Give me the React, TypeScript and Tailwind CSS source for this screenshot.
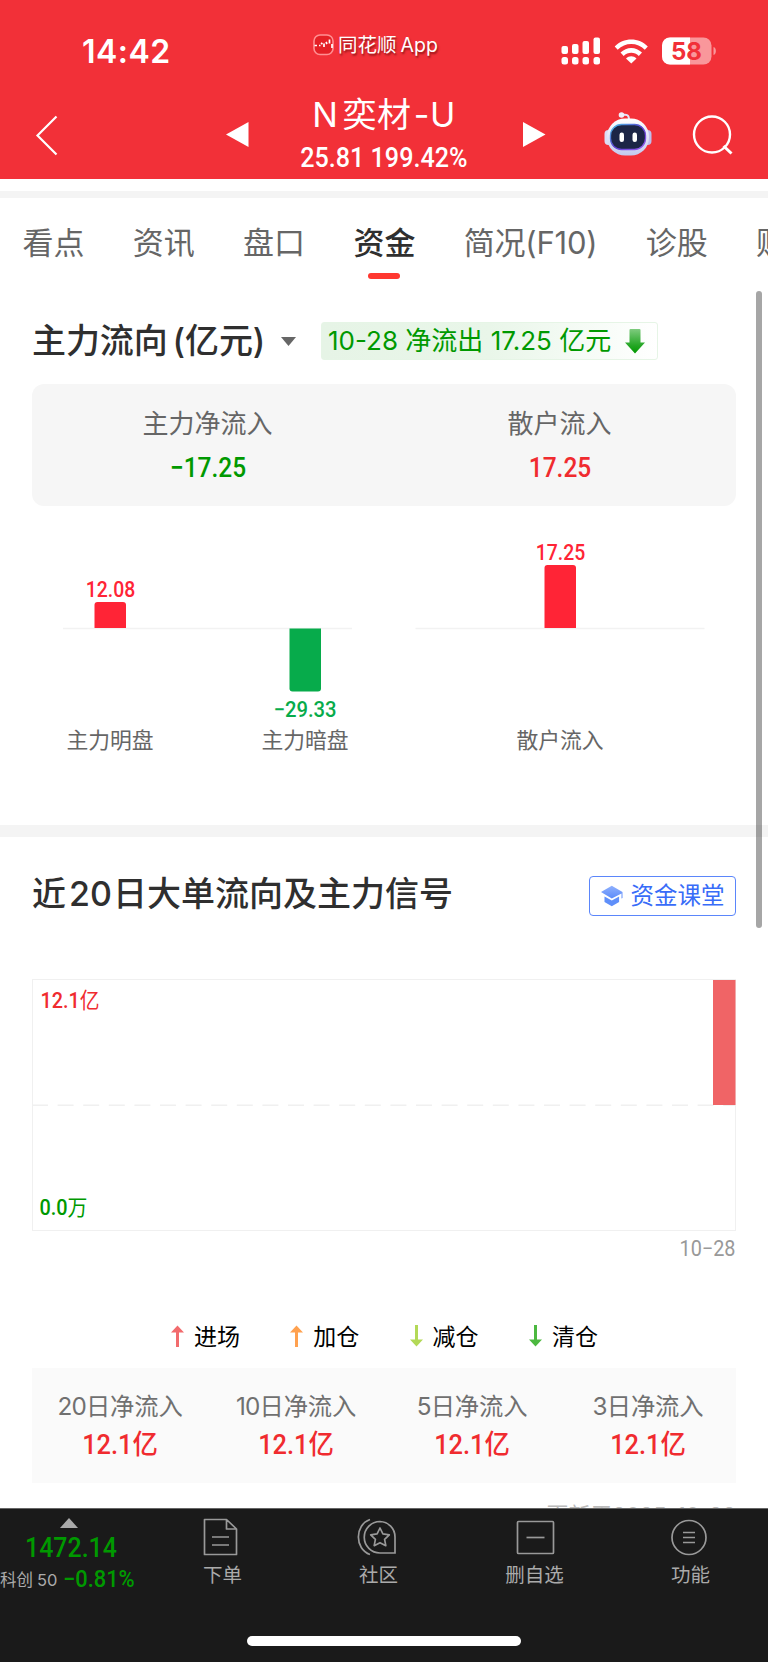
import React from "react";

const ui = "font-['Inter','Noto_Sans_CJK_SC',sans-serif]";
const din = "font-['Roboto','Noto_Sans_CJK_SC',sans-serif]";

function StatusBar() {
  return (
    <div className="flex h-[92px] items-start text-white">
      <div className="w-[313px] pl-[82px] pt-[35px] text-[32px] font-semibold leading-[33px] tracking-[0.5px]">14:42</div>
      <div className="flex w-[248px] items-center pt-[29px]">
        <svg width="21" height="27" viewBox="0 0 21 27" fill="none">
          <rect x="1" y="4" width="19" height="19.5" rx="6" fill="#e52026" stroke="#ff8f92" strokeWidth="1.6" />
          <path d="M1.500 14.500h2.500M6 14.500h1.500M8 12l1.500 1M11 12.500v3.500M13 11l1 2M16.500 8.500v4M19 13v4" stroke="#fff" strokeWidth="1.700" />
        </svg>
        <span className="ml-[4px] mt-[3px] whitespace-nowrap text-[19.5px] leading-[27px] [text-shadow:1px_2px_2px_rgba(80,0,0,.6)]">同花顺<span className="ml-[4px]">App</span></span>
      </div>
      <svg className="mt-[34px]" width="160" height="34" viewBox="0 0 160 34" fill="#fff">
        <rect x="0.500" y="12" width="6.500" height="8" rx="2" />
        <rect x="11" y="10" width="6.500" height="10" rx="2" />
        <rect x="21.500" y="7" width="6.500" height="13" rx="2" />
        <rect x="32.500" y="3.500" width="6.500" height="16.500" rx="2" />
        <rect x="0.500" y="23" width="6.500" height="7.500" rx="2.500" />
        <rect x="11" y="23" width="6.500" height="7.500" rx="2.500" />
        <rect x="21.500" y="23" width="6.500" height="7.500" rx="2.500" />
        <rect x="32.500" y="23" width="6.500" height="7.500" rx="2.500" />
        <path d="M53.700 12.600C62 3 78.500 3 86.800 12.600l-3 3.200C76.500 8 64 8 56.700 15.800z" />
        <path d="M59.500 18.600c6-6.300 15.500-6.300 21.500 0l-3.200 3.300c-4-4.300-11.100-4.300-15.100 0z" />
        <path d="M65 24.500c3-3.100 7.500-3.100 10.500 0l-5.250 4.900z" />
        <rect x="101" y="3.500" width="49.500" height="27" rx="8" fill="#f9979b" />
        <path d="M129 3.500h-20a8 8 0 0 0-8 8v11a8 8 0 0 0 8 8h20z" />
        <path d="M152.500 13c3.200 1 3.200 7 0 8z" fill="#f9979b" />
        <text x="125.500" y="25.500" textAnchor="middle" fontSize="24" fontWeight="700" fill="#f23038" className="font-['Inter',sans-serif]" textLength="31" lengthAdjust="spacingAndGlyphs">58</text>
      </svg>
    </div>
  );
}

function Robot() {
  return (
    <svg width="50" height="48" viewBox="0 0 50 48" fill="none">
      <defs>
        <linearGradient id="shell" x1="0" y1="0" x2="0" y2="1">
          <stop offset="0" stopColor="#ffffff" />
          <stop offset="1" stopColor="#c3c9ee" />
        </linearGradient>
        <linearGradient id="rim" x1="0" y1="0" x2="1" y2="1">
          <stop offset="0" stopColor="#4cc6e8" />
          <stop offset="0.500" stopColor="#5a3fd0" />
          <stop offset="1" stopColor="#9b5cf0" />
        </linearGradient>
      </defs>
      <path d="M19 5c5-1 7 0 7 5" stroke="#e4e4f8" strokeWidth="2" />
      <circle cx="18.500" cy="5" r="2.800" fill="#f1effc" />
      <rect x="1.500" y="20" width="8" height="15" rx="4" fill="#dcdcf5" />
      <rect x="40.500" y="20" width="8" height="15" rx="4" fill="#c0bdec" />
      <rect x="4" y="8.500" width="42" height="37" rx="18" fill="url(#shell)" />
      <rect x="7.500" y="14.500" width="35" height="25" rx="11" fill="#1c2546" stroke="url(#rim)" strokeWidth="1.300" />
      <rect x="16.500" y="22.500" width="4.500" height="9.500" rx="2.200" fill="#fff" />
      <rect x="29.500" y="22.500" width="4.500" height="9.500" rx="2.200" fill="#fff" />
    </svg>
  );
}

function TitleBar() {
  return (
    <div className="flex h-[87px] items-start text-white">
      <svg className="ml-[32px] mt-[20px]" width="30" height="46" viewBox="0 0 30 46" fill="none" stroke="#fff" strokeWidth="2.200">
        <path d="M24.500 4.500L5.500 23.500l19 19" />
      </svg>
      <svg className="ml-[164px] mt-[30px]" width="23" height="25" viewBox="0 0 23 25" fill="#fff">
        <path d="M0 12.500L22.500 0v25z" />
      </svg>
      <div className="flex w-[274px] flex-col items-center pr-[4px]">
        <div className="flex h-[46px] items-center whitespace-nowrap text-[34px] leading-[46px] tracking-[0.600px]">
          <span>N</span><span className="ml-1">奕材</span><span className="ml-[2px]">-U</span>
        </div>
        <div className={`${din} mt-[5px] scale-x-[0.93] whitespace-nowrap text-[27px] font-medium leading-[30px]`}>25.81 199.42%</div>
      </div>
      <svg className="mt-[30px]" width="23" height="25" viewBox="0 0 23 25" fill="#fff">
        <path d="M22.500 12.500L0 0v25z" />
      </svg>
      <div className="ml-[57px] mt-[18px]"><Robot /></div>
      <svg className="ml-[36px] mt-[20px]" width="46" height="46" viewBox="0 0 46 46" fill="none" stroke="#fff" strokeWidth="2.400">
        <circle cx="23" cy="22.500" r="18" />
        <path d="M34.500 34l8 7.500" strokeWidth="3" />
      </svg>
    </div>
  );
}

function Tabs() {
  const tabs = ["看点", "资讯", "盘口", "资金", "简况(F10)", "诊股", "财务"];
  return (
    <nav className="flex h-[92px] gap-[48.300px] overflow-hidden pl-[22.500px] text-[31px] text-[#666]">
      {tabs.map((t) => (
        <div key={t} className="flex shrink-0 flex-col items-center whitespace-nowrap">
          <span className={t === "资金" ? "mt-[23px] font-medium leading-[44px] text-[#2f2f2f]" : t === "简况(F10)" ? "mt-[23px] leading-[44px] tracking-[-0.200px]" : "mt-[23px] leading-[44px]"}>{t}</span>
          {t === "资金" && <span className="mt-[8px] h-[6px] w-[32px] rounded-full bg-[#ff3830]" />}
        </div>
      ))}
    </nav>
  );
}

function MainFlow() {
  return (
    <section className="h-[535px] px-[32px]">
      <div className="flex h-[102px] items-center">
        <h2 className="w-[240px] whitespace-nowrap text-[34px] font-medium leading-[44px] tracking-[-0.100px] text-[#2f2f2f]">主力流向<span className="ml-[5px]">(亿元)</span></h2>
        <svg className="ml-[9px]" width="15" height="9" viewBox="0 0 15 9" fill="#666"><path d="M0 0h15L7.500 9z" /></svg>
        <div className="ml-[25px] flex h-[38px] w-[337px] items-center rounded-[3px] border border-[#e6f5e6] bg-linear-to-r from-[#e6f4e6] via-[#e9f6e9] to-white pl-[6px] text-[#009900]">
          <span className="w-[290px] shrink-0 whitespace-nowrap text-[26px] leading-[36px]">10-28 净流出 17.25 亿元</span>
          <svg className="ml-[7px] shrink-0" width="20" height="25" viewBox="0 0 20 25">
            <defs><linearGradient id="down" x1="0" y1="0" x2="0" y2="1"><stop offset="0" stopColor="#7fcb7f" /><stop offset="0.700" stopColor="#21a521" /><stop offset="1" stopColor="#009900" /></linearGradient></defs>
            <path d="M5.500 0h9q1 0 1 1v12.500H20L10 24.500 0 13.500h4.500V1q0-1 1-1z" fill="url(#down)" />
          </svg>
        </div>
      </div>
      <div className="mt-[-8px] grid h-[122px] grid-cols-2 rounded-[12px] bg-[#f6f6f6] pt-[21px] text-center">
        <div>
          <div className="pr-px text-[26px] leading-[38px] text-[#666]">主力净流入</div>
          <div className={`${din} mt-[10px] scale-x-[0.89] text-[27.500px] font-medium leading-[30px] text-[#009900]`}>−17.25</div>
        </div>
        <div>
          <div className="pr-px text-[26px] leading-[38px] text-[#666]">散户流入</div>
          <div className={`${din} mt-[10px] scale-x-[0.89] text-[27.500px] font-medium leading-[30px] text-[#f02b2f]`}>17.25</div>
        </div>
      </div>
      <svg width="704" height="270" viewBox="32 506 704 270" className={din}>
        <path d="M63 628.500H352M415.500 628.500H704.500" stroke="#f2f2f2" strokeWidth="1.300" />
        <path d="M94.500 628v-23q0-3 3-3h25.500q3 0 3 3v23z" fill="#ff2436" />
        <path d="M289.500 628.500v60q0 3 3 3H318q3 0 3-3v-60z" fill="#07ab4b" />
        <path d="M544.500 628v-60q0-3 3-3H573q3 0 3 3v60z" fill="#ff2436" />
        <g fontSize="21.500" fontWeight="500" textAnchor="middle">
          <text x="110.500" y="596.500" fill="#ff2436" textLength="49.500" lengthAdjust="spacingAndGlyphs">12.08</text>
          <text x="305" y="716.500" fill="#07ab4b" textLength="63" lengthAdjust="spacingAndGlyphs">−29.33</text>
          <text x="560.500" y="559.500" fill="#ff2436" textLength="49.500" lengthAdjust="spacingAndGlyphs">17.25</text>
        </g>
        <g fontSize="21.800" fill="#666" textAnchor="middle">
          <text x="110" y="748">主力明盘</text>
          <text x="305" y="748">主力暗盘</text>
          <text x="560" y="748">散户流入</text>
        </g>
      </svg>
    </section>
  );
}

function SignalChart() {
  return (
    <svg width="704" height="290" viewBox="32 978 704 290" className={din}>
      <rect x="32.500" y="979.500" width="703" height="251" fill="none" stroke="#f0f0f0" />
      <path d="M32 1105.200H736" stroke="#f0f0f0" strokeWidth="1.400" strokeDasharray="16 9.600" />
      <rect x="713" y="980" width="22.500" height="125" fill="#f06466" />
      <g fontSize="21.500" fontWeight="500">
        <text x="40.500" y="1008" fill="#f02b2f" textLength="59" lengthAdjust="spacingAndGlyphs">12.1<tspan fontWeight="400">亿</tspan></text>
        <text x="39.500" y="1214.500" fill="#009900" textLength="48" lengthAdjust="spacingAndGlyphs">0.0<tspan fontWeight="400">万</tspan></text>
      </g>
      <text x="735.500" y="1256" fontSize="21.500" fill="#999" textAnchor="end" textLength="56" lengthAdjust="spacingAndGlyphs">10−28</text>
    </svg>
  );
}

function Signals() {
  const legend = [
    { name: "进场", color: "#f26b6d", up: true },
    { name: "加仓", color: "#ffa14f", up: true },
    { name: "减仓", color: "#b3d957", up: false },
    { name: "清仓", color: "#4cb840", up: false },
  ];
  return (
    <section className="h-[671px] overflow-hidden px-[32px]">
      <div className="flex h-[141px] items-start justify-between">
        <h2 className="mt-[34px] whitespace-nowrap text-[34px] font-medium leading-[46px] text-[#2f2f2f]">近<span className="ml-[3px] mr-[1px]">20</span>日大单流向及主力信号</h2>
        <div className="mt-[39px] flex h-[40px] w-[147.500px] items-center rounded-[4px] border border-[#5b86fb] pl-[11px] text-[#386cf8]">
          <svg width="22" height="22" viewBox="0 0 22 22">
            <defs><linearGradient id="cap" x1="0" y1="0" x2="0" y2="1"><stop offset="0" stopColor="#8fb0fd" /><stop offset="1" stopColor="#5b8bfa" /></linearGradient></defs>
            <path d="M10.800 0.800L21.500 7v6l-1 .5V8.500L10.800 13.500 0 7z" fill="url(#cap)" />
            <path d="M3.500 11.500l7.300 4 7.300-4v5.500l-7.300 4.300-7.300-4.300z" fill="#5f8ffa" />
          </svg>
          <span className="ml-[8px] whitespace-nowrap text-[23.500px] leading-[36px]">资金课堂</span>
        </div>
      </div>
      <SignalChart />
      <div className="flex h-[100px] gap-[50.300px] pl-[139px] pt-[51px] text-black">
        {legend.map((l) => (
          <div key={l.name} className="flex h-[36px] items-center">
            <svg width="13" height="22" viewBox="0 0 13 22" className={l.up ? "mb-[2px]" : "mb-[2px] rotate-180"}>
              <path d="M6.500 0.500L13 7.500H8V22H5V7.500H0z" fill={l.color} />
            </svg>
            <span className="ml-[10px] whitespace-nowrap text-[23px] leading-[36px]">{l.name}</span>
          </div>
        ))}
      </div>
      <div className="grid h-[115px] grid-cols-4 bg-[#fafafa] pt-[20px] text-center">
        {["20", "10", "5", "3"].map((d) => (
          <div key={d}>
            <div className="whitespace-nowrap text-[24.300px] leading-[36px] tracking-[-0.150px] text-[#707070]"><span className="tracking-[-0.800px]">{d}</span>日净流入</div>
            <div className={`${din} mt-[3px] scale-x-[0.94] text-[27px] font-medium leading-[36px] text-[#f02b2f]`}>12.1亿</div>
          </div>
        ))}
      </div>
      <div className="mt-[17px] text-right text-[22px] leading-[30px] text-[#bbb]">更新于2025-10-28</div>
    </section>
  );
}

function NavItem({ label, children }: { label: string; children: React.ReactNode }) {
  return (
    <div className="flex w-[156px] shrink-0 flex-col items-center text-[#aaa]">
      <svg className="mt-[8px]" width="44" height="42" viewBox="0 0 44 42" fill="none" stroke="#999" strokeWidth="1.700">{children}</svg>
      <span className="mt-[3px] pl-px text-[19.500px] leading-[26px]">{label}</span>
    </div>
  );
}

function BottomBar() {
  return (
    <footer className="h-[154px] border-t border-[#666] bg-[#1a1a1a]">
      <div className="flex h-[127px]">
        <div className="flex w-[144px] shrink-0 flex-col items-start">
          <svg className="ml-[60px] mt-[9px]" width="18" height="10" viewBox="0 0 18 10" fill="#aaa"><path d="M9 0l9 10H0z" /></svg>
          <div className={`${din} ml-[25px] mt-[5px] origin-left scale-x-[0.89] text-[28px] font-medium leading-[30px] text-[#009900]`}>1472.14</div>
          <div className="flex items-center whitespace-nowrap">
            <span className="mt-[3px] w-[63px] text-[16.500px] leading-[28px] text-[#aaa]">科创<span className="ml-[4px]">50</span></span>
            <span className={`${din} origin-left scale-x-[0.91] text-[24px] font-medium leading-[28px] text-[#009900]`}>−0.81%</span>
          </div>
        </div>
        <NavItem label="下单">
          <path d="M4.500 2.500H26.500L36.500 12V37.500H4.500zM26.500 2.500V12H36.500M12 20H29M12 28H29" strokeLinejoin="round" />
        </NavItem>
        <NavItem label="社区">
          <path d="M14 2.500C-1.500 8 -1.500 32 14 37.500" />
          <path d="M24 4.500a15.500 15.500 0 1 0 0 31.500h15V20A15.500 15.500 0 0 0 24 4.500z" />
          <path d="M24 11l2.900 5.900 6.400.9-4.700 4.500 1.200 6.400-5.800-3-5.800 3 1.200-6.400-4.700-4.500 6.400-.9z" strokeLinejoin="round" />
        </NavItem>
        <NavItem label="删自选">
          <rect x="5.500" y="4.500" width="36" height="32" rx="1" />
          <path d="M14.500 20.500H32.500" />
        </NavItem>
        <NavItem label="功能">
          <circle cx="21" cy="20.500" r="17" />
          <path d="M15 15.500H27M15 20.500H27M15 25.500H27" />
        </NavItem>
      </div>
      <div className="mx-auto h-[10px] w-[274px] rounded-full bg-white" />
    </footer>
  );
}

export default function App() {
  return (
    <div className={`relative h-[1663px] w-[768px] overflow-hidden bg-white ${ui}`}>
      <header className="h-[179px] bg-[#f23038]">
        <StatusBar />
        <TitleBar />
      </header>
      <div className="mt-[12px] h-[7px] bg-[#f4f4f4]" />
      <Tabs />
      <MainFlow />
      <div className="h-[12px] bg-[#f4f4f4]" />
      <Signals />
      <BottomBar />
      <div className="absolute left-[756px] top-[291px] h-[637px] w-[6px] rounded-full bg-black/35" />
    </div>
  );
}
